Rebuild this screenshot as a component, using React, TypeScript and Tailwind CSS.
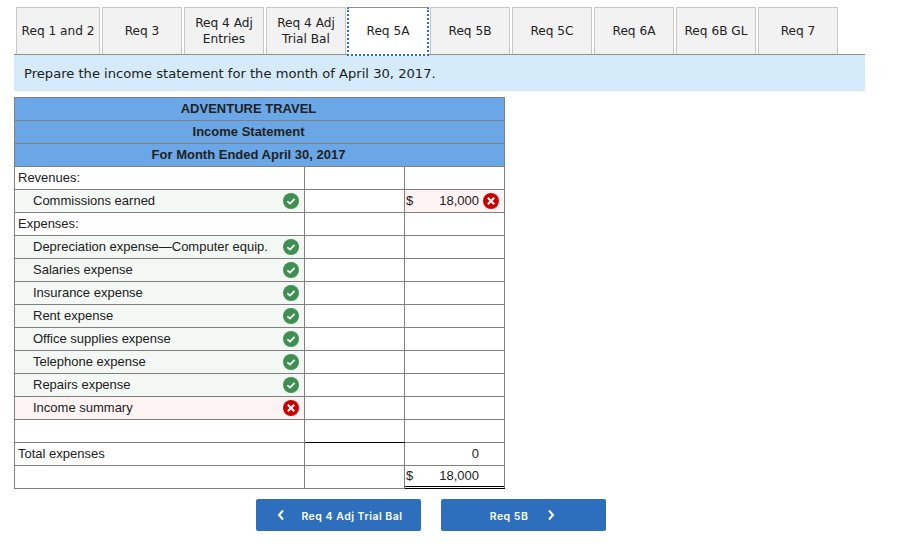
const tabs = ["Req 1 and 2", "Req 3", "Req 4 Adj Entries", "Req 4 Adj Trial Bal", "Req 5A", "Req 5B", "Req 5C", "Req 6A", "Req 6B GL", "Req 7"];

const rows = [
    { label: "Revenues:" },
    { label: "Commissions earned", indent: true, mark: "ok", dollar: true, value: "18,000", valueMark: "bad" },
    { label: "Expenses:" },
    { label: "Depreciation expense—Computer equip.", indent: true, mark: "ok" },
    { label: "Salaries expense", indent: true, mark: "ok" },
    { label: "Insurance expense", indent: true, mark: "ok" },
    { label: "Rent expense", indent: true, mark: "ok" },
    { label: "Office supplies expense", indent: true, mark: "ok" },
    { label: "Telephone expense", indent: true, mark: "ok" },
    { label: "Repairs expense", indent: true, mark: "ok" },
    { label: "Income summary", indent: true, mark: "bad" },
    { label: "", topLine: true },
    { label: "Total expenses", value: "0" },
    { label: "", dollar: true, value: "18,000", total: true },
];

const Mark = ({ type }: { type: string }) => (
    <svg width="16" height="16" viewBox="0 0 16 16" className="shrink-0">
        <circle cx="8" cy="8" r="8" fill={type === "ok" ? "#3f8f53" : "#cc0000"} />
        {type === "ok" ? (
            <path d="M4.4 8.3 L7 10.6 L11.6 5.8" fill="none" stroke="#fff" strokeWidth="1.7" />
        ) : (
            <path d="M4.8 4.8 L11.2 11.2 M11.2 4.8 L4.8 11.2" fill="none" stroke="#fff" strokeWidth="2" />
        )}
    </svg>
);

const App = () => {
    return (
        <div className="w-[906px] h-[559px] bg-white overflow-hidden font-['Liberation_Sans',sans-serif] text-[#212121]">
            <div className="pt-[7px] pl-[14px] w-[865px]">
                <div className="flex gap-[2px] pl-[2px] h-[48px] border-b border-b-[#8f8f8f]">
                    {tabs.map((t, i) => (
                        <div
                            key={t}
                            className={
                                "flex items-center justify-center text-center font-['DejaVu_Sans',sans-serif] text-[12.15px] leading-[16px] " +
                                (t === "Req 5A"
                                    ? "relative z-10 -mx-[1px] w-[82px] h-[49px] shrink-0 bg-white border-x-2 border-b-2 border-dotted border-x-[#2f6fbd] border-b-[#2f6fbd] border-t border-t-[#8f8f8f] [border-top-style:solid]"
                                    : (i === 0 ? "w-[84px] " : "w-[80px] ") + "bg-[#f2f2f2] border border-[#c8c8c8] border-b-0 h-[47px]")
                            }
                        >
                            <span className={t.length > 12 ? "w-[70px]" : ""}>{t}</span>
                        </div>
                    ))}
                </div>
                <div className="h-[36px] bg-[#d5ebfa] flex items-center pl-[10px] pt-[1px] font-['DejaVu_Sans',sans-serif] text-[13.1px]">
                    Prepare the income statement for the month of April 30, 2017.
                </div>
            </div>

            <table className="ml-[14px] mt-[6px] w-[490px] table-fixed border-collapse text-[13px] border border-[#808080]">
                <colgroup>
                    <col className="w-[290px]" />
                    <col className="w-[100px]" />
                    <col className="w-[100px]" />
                </colgroup>
                <thead>
                    {["ADVENTURE TRAVEL", "Income Statement", "For Month Ended April 30, 2017"].map((h) => (
                        <tr key={h} className="h-[23px]">
                            <th colSpan={3} className="p-0 pr-[22px] bg-[#6ba7e6] border border-[#808080] text-center font-bold">
                                {h}
                            </th>
                        </tr>
                    ))}
                </thead>
                <tbody>
                    {rows.map((r, i) => (
                        <tr key={i} className="h-[23px]">
                            <td
                                className={
                                    "p-0 border border-[#808080] " +
                                    (r.mark === "ok" ? "bg-[#f3f8f4]" : r.mark === "bad" ? "bg-[#fdf3f3]" : "bg-white")
                                }
                            >
                                <div className={"flex items-center justify-between pr-[5px] " + (r.indent ? "pl-[18px]" : "pl-[3px]")}>
                                    <span>{r.label}</span>
                                    {r.mark && <Mark type={r.mark} />}
                                </div>
                            </td>
                            <td className={"p-0 border border-[#808080] " + (r.topLine ? "border-b-black" : "")} />
                            <td
                                className={
                                    "p-0 border border-[#808080] " +
                                    (r.valueMark === "bad" ? "bg-[#fdf3f3] " : "") +
                                    (r.total ? "border-t-black border-b-black align-top" : "")
                                }
                            >
                                {r.value && (
                                    <div
                                        className={
                                            "flex items-center justify-between pl-[1px] pr-[5px] " +
                                            (r.total ? "h-[21px] pb-[1px] border-b border-b-black" : "")
                                        }
                                    >
                                        <span>{r.dollar ? "$" : ""}</span>
                                        <div className="flex items-center gap-[4px]">
                                            <span className={r.valueMark ? "" : "mr-[20px]"}>{r.value}</span>
                                            {r.valueMark && <Mark type={r.valueMark} />}
                                        </div>
                                    </div>
                                )}
                            </td>
                        </tr>
                    ))}
                </tbody>
            </table>

            <div className="flex gap-[20px] ml-[256px] mt-[10px] font-['Inter',sans-serif] text-[10.5px] font-semibold text-white">
                <button className="relative w-[165px] h-[32px] bg-[#2e6fbd] rounded-[2px] flex items-center justify-center pl-[27px] pt-[4px] tracking-[0.5px]">
                    <svg width="8" height="12" viewBox="0 0 8 12" className="absolute left-[21px] top-[10px]">
                        <path d="M6 1.5 L2 6 L6 10.5" fill="none" stroke="#fff" strokeWidth="2" />
                    </svg>
                    Req 4 Adj Trial Bal
                </button>
                <button className="relative w-[165px] h-[32px] bg-[#2e6fbd] rounded-[2px] flex items-center justify-center pr-[29px] pt-[4px] tracking-[0.5px]">
                    Req 5B
                    <svg width="8" height="12" viewBox="0 0 8 12" className="absolute right-[51px] top-[10px]">
                        <path d="M2 1.5 L6 6 L2 10.5" fill="none" stroke="#fff" strokeWidth="2" />
                    </svg>
                </button>
            </div>
        </div>
    );
};

export default App;
